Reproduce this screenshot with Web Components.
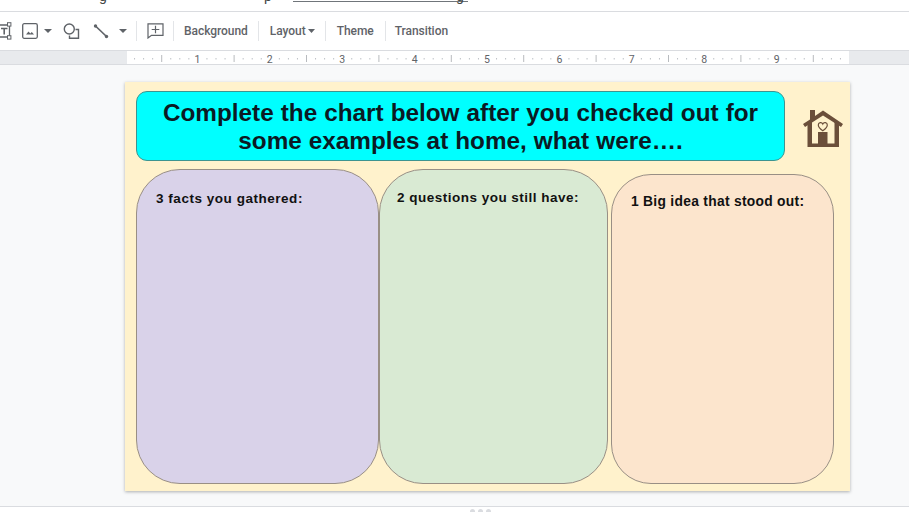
<!DOCTYPE html>
<html>
<head>
<meta charset="utf-8">
<title>Slides</title>
<style>
  html, body { margin: 0; height: 100%; overflow: hidden; background: #fff; }
  body { font-family: Roboto, "Liberation Sans", sans-serif; }
</style>
</head>
<body>
<slides-app>
  <menu-strip slot="menu"></menu-strip>
  <tool-bar slot="tools"></tool-bar>
  <slide-ruler slot="ruler"></slide-ruler>
  <slide-sheet slot="canvas">
    <title-box slot="title">Complete the chart below after you checked out for some examples at home, what were….</title-box>
    <home-icon slot="icon"></home-icon>
    <chart-card slot="cards" style="--fill:#d9d2e9;--w:243px;--top:0px;--text-x:19px;--text-y:20px;--ls:.53px">3 facts you gathered:</chart-card>
    <chart-card slot="cards" style="--fill:#d9ead3;--w:229px;--top:0px;--text-x:17px;--text-y:19px;--ls:.49px">2 questions you still have:</chart-card>
    <chart-card slot="cards" style="--fill:#fce5cd;--w:223px;--top:5px;--text-x:19px;--text-y:18px;--gap:3px;--ls:.3px;--r:40px;--size:13.800px">1 Big idea that stood out:</chart-card>
  </slide-sheet>
</slides-app>

<script>
class SlidesApp extends HTMLElement {
  constructor() {
    super();
    this.attachShadow({ mode: 'open' }).innerHTML = `
    <style>
      :host { display: flex; flex-direction: column; height: 512px; overflow: hidden; }
      ::slotted(*) { flex: none; }
      .canvas {
        flex: none;
        height: 442px;
        background: #f8f9fa;
        border-bottom: 1px solid #dadce0;
        padding: 17px 0 0 125px;
        box-sizing: border-box;
      }
      .foot { flex: 1 1 0; min-height: 0; overflow: hidden; display: flex; justify-content: center; align-items: flex-start; gap: 3px; padding: 2px 0 0 51px; background: #fff; }
      .foot i { flex: none; width: 5px; height: 5px; border-radius: 50%; background: #dadce0; }
    </style>
    <slot name="menu"></slot>
    <slot name="tools"></slot>
    <slot name="ruler"></slot>
    <div class="canvas"><slot name="canvas"></slot></div>
    <div class="foot"><i></i><i></i><i></i></div>
    `;
  }
}

// only the descenders of the line above show in the crop, so only those letters are kept
class MenuStrip extends HTMLElement {
  constructor() {
    super();
    this.attachShadow({ mode: 'open' }).innerHTML = `
    <style>
      :host { display: block; height: 12px; box-sizing: border-box; border-bottom: 1px solid #dadce0; overflow: hidden; }
      .line { display: flex; height: 13px; margin-top: -11px; padding-left: 99px; font: 14px/14px Roboto, sans-serif; color: #444746; white-space: nowrap; }
      .link { width: 175px; height: 13px; box-sizing: border-box; margin-left: 21px; border-bottom: 1px solid #70757a; text-align: right; padding-right: 4px; }
    </style>
    <div class="line"><span>g</span><span style="margin-left:157px">p</span><span class="link">g</span></div>
    `;
  }
}

class ToolBar extends HTMLElement {
  constructor() {
    super();
    this.attachShadow({ mode: 'open' }).innerHTML = `
    <style>
      :host { display: flex; align-items: center; height: 38px; background: #fff; color: #5f6368; font: 500 12px Roboto, sans-serif; overflow: hidden; }
      svg { display: block; flex: none; }
      .sep { width: 1px; height: 20px; background: #e3e5e8; flex: none; }
      span { white-space: nowrap; letter-spacing: -0.05px; }
    </style>
    <svg width="13" height="18" viewBox="0 0 13 18" style="margin-left:-1px" fill="none" stroke="#5f6368">
      <path d="M0 3h10.500v12H0" stroke-width="1.300"/>
      <path d="M2 6.500h6.500M5.200 6.500v6" stroke-width="1.600"/>
      <rect x="8.500" y=".7" width="3.400" height="3.400" fill="#fff" stroke-width="1"/>
      <rect x="8.500" y="13.700" width="3.400" height="3.400" fill="#fff" stroke-width="1"/>
    </svg>
    <svg width="16" height="16" viewBox="0 0 16 16" style="margin-left:10px" fill="none">
      <rect x=".7" y=".7" width="14.600" height="14.600" rx="1.500" stroke="#5f6368" stroke-width="1.300"/>
      <path d="M4 11.500l2.500-3 1.800 2 1.500-1.500 2.200 2.500z" fill="#5f6368"/>
    </svg>
    <svg width="8" height="4" viewBox="0 0 8 4" style="margin-left:6px"><path d="M0 0h8L4 4z" fill="#5f6368"/></svg>
    <svg width="17" height="16" viewBox="0 0 17 16" style="margin-left:11px" fill="none" stroke="#5f6368" stroke-width="1.400">
      <circle cx="6.300" cy="6" r="5"/>
      <path d="M12.500 6.500h3v8.800h-9v-2.800"/>
    </svg>
    <svg width="16" height="15" viewBox="0 0 16 15" style="margin-left:13px"><path d="M2.500 2l11 10.500" stroke="#5f6368" stroke-width="1.700"/><circle cx="2.500" cy="2" r="1.700" fill="#5f6368"/><circle cx="13.500" cy="12.500" r="1.700" fill="#5f6368"/></svg>
    <svg width="8" height="4" viewBox="0 0 8 4" style="margin-left:10px"><path d="M0 0h8L4 4z" fill="#5f6368"/></svg>
    <div class="sep" style="margin-left:9px"></div>
    <svg width="17" height="16" viewBox="0 0 17 16" style="margin-left:10px" fill="none" stroke="#5f6368" stroke-width="1.200">
      <path d="M1 .8h15v11.500H4.500L1 15z"/>
      <path d="M8.500 2.800v7.500M4.700 6.500h7.600"/>
    </svg>
    <div class="sep" style="margin-left:9px"></div>
    <span style="margin-left:10px">Background</span>
    <div class="sep" style="margin-left:10px"></div>
    <span style="margin-left:11px">Layout</span>
    <svg width="7" height="4" viewBox="0 0 7 4" style="margin-left:2px"><path d="M0 0h7L3.500 4z" fill="#5f6368"/></svg>
    <div class="sep" style="margin-left:10px"></div>
    <span style="margin-left:11px">Theme</span>
    <div class="sep" style="margin-left:11px"></div>
    <span style="margin-left:9px">Transition</span>
    `;
  }
}

class SlideRuler extends HTMLElement {
  constructor() {
    super();
    this.attachShadow({ mode: 'open' });
    // one inch is 72.4px, with a long tick at each half and short ticks between
    let marks = '';
    const inch = 72.4, start = 125;
    for (let i = 0; i < 10; i++) {
      for (let j = 1; j < 8; j++) {
        const x = inch * i + j * inch / 8;
        if (j === 4) marks += `<rect x="${x}" y="4" width="1" height="7" fill="#b8bbbf"/>`;
        else marks += `<rect x="${x}" y="7" width="1" height="1.500" fill="#bdc1c6"/>`;
      }
      if (i > 0) marks += `<text x="${inch * i}" y="11.500" text-anchor="middle">${i}</text>`;
    }
    this.shadowRoot.innerHTML = `
    <style>
      :host { display: block; height: 15px; box-sizing: border-box; background: #e8eaed; border-top: 1px solid #dadce0; border-bottom: 1px solid #dadce0; padding-left: ${start + 2}px; }
      svg { display: block; background: #fff; }
      text { font: 10.500px Roboto, sans-serif; fill: #5f6368; }
    </style>
    <svg width="722" height="13" viewBox="2 0 722 13">${marks}</svg>
    `;
  }
}

class SlideSheet extends HTMLElement {
  constructor() {
    super();
    this.attachShadow({ mode: 'open' }).innerHTML = `
    <style>
      :host {
        display: block;
        box-sizing: border-box;
        width: 725px;
        height: 409px;
        background: #fff2cc;
        box-shadow: 0 1px 3px rgba(60, 64, 67, .4);
        padding: 9px 0 0 11px;
      }
      .top { display: flex; align-items: center; height: 70px; margin-bottom: 8px; }
      .cards { display: flex; align-items: stretch; height: 315px; }
    </style>
    <div class="top"><slot name="title"></slot><slot name="icon"></slot></div>
    <div class="cards"><slot name="cards"></slot></div>
    `;
  }
}

class TitleBox extends HTMLElement {
  constructor() {
    super();
    this.attachShadow({ mode: 'open' }).innerHTML = `
    <style>
      :host {
        display: flex;
        align-items: center;
        justify-content: center;
        box-sizing: border-box;
        width: 649px;
        height: 70px;
        padding: 1px 20px 0;
        background: #00ffff;
        border: 1px solid #3d9490;
        border-radius: 11px;
        color: #0b1a24;
        font: 700 24.300px/28px "Liberation Sans", Arial, sans-serif;
        word-spacing: .3px;
        text-align: center;
      }
    </style>
    <div><slot></slot></div>
    `;
  }
}

class HomeIcon extends HTMLElement {
  constructor() {
    super();
    this.attachShadow({ mode: 'open' }).innerHTML = `
    <style>
      :host { display: block; margin: 5px 0 0 18px; width: 40px; height: 37px; }
      svg { display: block; }
    </style>
    <svg width="40" height="37" viewBox="0 0 40 37">
      <path d="M0 14L7 9.500V0h5v6L20 .5 40 14l-2 3L20 5.500 2 17z" fill="#6b4f3a"/>
      <path d="M4.500 14V37H36V14L31.500 11.500V33.500H9V11.500z" fill="#6b4f3a"/>
      <rect x="15" y="22" width="9.500" height="15" fill="#6b4f3a"/>
      <path d="M19.800 20.800c-3.700-2.400-4.500-4.200-4.500-5.700 0-2.800 3.500-3.300 4.500-1 1-2.300 4.500-1.800 4.500 1 0 1.500-.8 3.300-4.500 5.700z" fill="none" stroke="#6b4f3a" stroke-width="1.200"/>
    </svg>
    `;
  }
}

class ChartCard extends HTMLElement {
  constructor() {
    super();
    this.attachShadow({ mode: 'open' }).innerHTML = `
    <style>
      :host {
        display: block;
        box-sizing: border-box;
        flex: none;
        width: var(--w);
        margin-top: var(--top);
        margin-left: var(--gap, 0);
        padding: var(--text-y) 8px 0 var(--text-x);
        background: var(--fill);
        border: 1px solid #998f85;
        border-radius: var(--r, 44px);
        color: #111;
        font: 700 var(--size, 13.500px)/17px "Liberation Sans", Arial, sans-serif;
        letter-spacing: var(--ls);
        white-space: nowrap;
      }
    </style>
    <slot></slot>
    `;
  }
}

customElements.define('slides-app', SlidesApp);
customElements.define('menu-strip', MenuStrip);
customElements.define('tool-bar', ToolBar);
customElements.define('slide-ruler', SlideRuler);
customElements.define('slide-sheet', SlideSheet);
customElements.define('title-box', TitleBox);
customElements.define('home-icon', HomeIcon);
customElements.define('chart-card', ChartCard);
</script>
</body>
</html>
